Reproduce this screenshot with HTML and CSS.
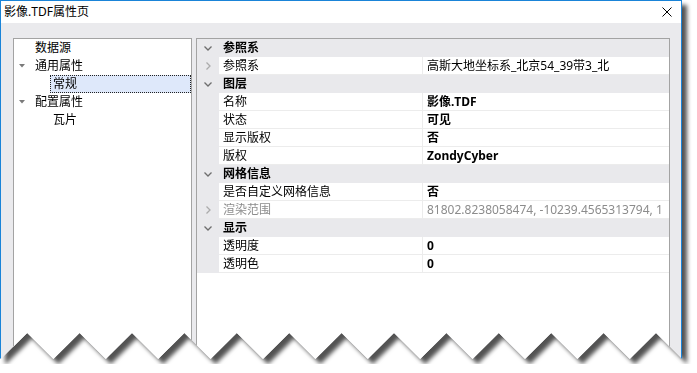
FILE: index.html
```html
<!DOCTYPE html>
<html lang="zh-CN">
<head>
    <meta charset="UTF-8">
    <title>影像.TDF属性页</title>
    <link rel="stylesheet" href="styles.css">
</head>
<body>
    <div class="frame">
        <div class="window">
            <div class="titlebar">
                <span class="title">影像.TDF属性页</span>
                <svg class="close" width="10" height="10" viewBox="0 0 10 10">
                    <path d="M0.5 0.5 L9.5 9.5 M9.5 0.5 L0.5 9.5" stroke="#000" stroke-width="1" fill="none"/>
                </svg>
            </div>
            <div class="body">
                <!-- left: page tree -->
                <div class="tree">
                    <div class="node">
                        <span class="toggle"></span>
                        <span class="label">数据源</span>
                    </div>
                    <div class="node">
                        <span class="toggle"><svg width="6" height="4" viewBox="0 0 6 4"><polygon points="0,0 6,0 3,3.5" fill="#7a7a7a"/></svg></span>
                        <span class="label">通用属性</span>
                    </div>
                    <div class="node child">
                        <span class="label selected">常规</span>
                    </div>
                    <div class="node">
                        <span class="toggle"><svg width="6" height="4" viewBox="0 0 6 4"><polygon points="0,0 6,0 3,3.5" fill="#7a7a7a"/></svg></span>
                        <span class="label">配置属性</span>
                    </div>
                    <div class="node child">
                        <span class="label">瓦片</span>
                    </div>
                </div>

                <!-- right: property grid -->
                <div class="grid">
                    <div class="row cat">
                        <span class="gutter"><svg width="8" height="5" viewBox="0 0 8 5"><path d="M0.5 0.5 L4 4 L7.5 0.5" stroke="#6e6e6e" stroke-width="1.3" fill="none"/></svg></span>
                        <span class="cat-name">参照系</span>
                    </div>
                    <div class="row">
                        <span class="gutter"><svg width="5" height="8" viewBox="0 0 5 8"><path d="M0.5 0.5 L4 4 L0.5 7.5" stroke="#ababab" stroke-width="1.3" fill="none"/></svg></span>
                        <span class="name">参照系</span>
                        <span class="value plain">高斯大地坐标系_北京54_39带3_北</span>
                    </div>
                    <div class="row cat">
                        <span class="gutter"><svg width="8" height="5" viewBox="0 0 8 5"><path d="M0.5 0.5 L4 4 L7.5 0.5" stroke="#6e6e6e" stroke-width="1.3" fill="none"/></svg></span>
                        <span class="cat-name">图层</span>
                    </div>
                    <div class="row">
                        <span class="gutter"></span>
                        <span class="name">名称</span>
                        <span class="value">影像.TDF</span>
                    </div>
                    <div class="row">
                        <span class="gutter"></span>
                        <span class="name">状态</span>
                        <span class="value">可见</span>
                    </div>
                    <div class="row">
                        <span class="gutter"></span>
                        <span class="name">显示版权</span>
                        <span class="value">否</span>
                    </div>
                    <div class="row">
                        <span class="gutter"></span>
                        <span class="name">版权</span>
                        <span class="value">ZondyCyber</span>
                    </div>
                    <div class="row cat">
                        <span class="gutter"><svg width="8" height="5" viewBox="0 0 8 5"><path d="M0.5 0.5 L4 4 L7.5 0.5" stroke="#6e6e6e" stroke-width="1.3" fill="none"/></svg></span>
                        <span class="cat-name">网格信息</span>
                    </div>
                    <div class="row">
                        <span class="gutter"></span>
                        <span class="name">是否自定义网格信息</span>
                        <span class="value">否</span>
                    </div>
                    <div class="row disabled">
                        <span class="gutter"><svg width="5" height="8" viewBox="0 0 5 8"><path d="M0.5 0.5 L4 4 L0.5 7.5" stroke="#ababab" stroke-width="1.3" fill="none"/></svg></span>
                        <span class="name">渲染范围</span>
                        <span class="value plain">81802.8238058474, -10239.4565313794, 1</span>
                    </div>
                    <div class="row cat">
                        <span class="gutter"><svg width="8" height="5" viewBox="0 0 8 5"><path d="M0.5 0.5 L4 4 L7.5 0.5" stroke="#6e6e6e" stroke-width="1.3" fill="none"/></svg></span>
                        <span class="cat-name">显示</span>
                    </div>
                    <div class="row">
                        <span class="gutter"></span>
                        <span class="name">透明度</span>
                        <span class="value">0</span>
                    </div>
                    <div class="row">
                        <span class="gutter"></span>
                        <span class="name">透明色</span>
                        <span class="value">0</span>
                    </div>
                </div>
            </div>
        </div>
    </div>
</body>
</html>
```

FILE: styles.css
```css
body {
    margin: 0;
    background-color: #fff;
    font-family: "Noto Sans", "Noto Sans CJK SC", sans-serif;
    font-size: 12px;
    color: #000;
}

/* the shadow falls on the torn edge and the right side */
.frame {
    width: 682px;
    filter: drop-shadow(5px 5px 2px rgba(0, 0, 0, 0.68));
}

.window {
    width: 682px;
    height: 364px;
    box-sizing: border-box;
    border: 1px solid #1a84d8;
    border-bottom: none;
    background-color: #eaeaed;
    display: flex;
    flex-direction: column;
    clip-path: polygon(0 0, 682px 0, 682px 359px,
        656px 333px, 629.8px 359px, 603.6px 333px, 577.4px 359px,
        551.2px 333px, 525px 359px, 498.8px 333px, 472.6px 359px,
        446.4px 333px, 420.2px 359px, 394px 333px, 367.8px 359px,
        341.6px 333px, 315.4px 359px, 289.2px 333px, 263px 359px,
        236.8px 333px, 210.6px 359px, 184.4px 333px, 158.2px 359px,
        132px 333px, 105.8px 359px, 79.6px 333px, 53.4px 359px,
        27.2px 333px, 1px 359px, 0 358px);
}

.titlebar {
    height: 22px;
    flex-shrink: 0;
    background-color: #fff;
    display: flex;
    align-items: center;
    justify-content: space-between;
    padding: 0 9px 0 3px;
}

.title {
    line-height: 22px;
}

.close {
    display: block;
}

.body {
    flex: 1;
    display: flex;
    gap: 4px;
    padding: 15px 11px 0 12px;
}

.tree {
    width: 179px;
    flex-shrink: 0;
    box-sizing: border-box;
    border: 1px solid #a3a3a3;
    background-color: #fff;
}

.node {
    height: 18px;
    display: flex;
    align-items: center;
}

.toggle {
    width: 21px;
    display: flex;
    align-items: center;
    padding-left: 5px;
    box-sizing: border-box;
}

.node.child {
    padding-left: 36px;
}

.node .label {
    line-height: 16px;
}

.node.child .label {
    flex: 1;
    height: 18px;
    line-height: 16px;
    box-sizing: border-box;
    border: 1px solid transparent;
    padding-left: 2px;
}

.node.child .label.selected {
    background-color: #dee8fa;
    border: 1px dotted #222;
}

.grid {
    flex: 1;
    box-sizing: border-box;
    border: 1px solid #a3a3a3;
    background-color: #fff;
}

.row {
    height: 18px;
    display: grid;
    grid-template-columns: 22px 204px 1fr;
}

.gutter {
    background-color: #e9e9ec;
    display: flex;
    align-items: center;
    justify-content: center;
}

.row.cat {
    background-color: #e9e9ec;
}

.cat-name {
    grid-column: 2 / 4;
    font-weight: bold;
    line-height: 18px;
    padding-left: 4px;
}

.name,
.value {
    box-sizing: border-box;
    line-height: 17px;
    border-bottom: 1px solid #ececec;
    padding-left: 4px;
    white-space: nowrap;
    overflow: hidden;
}

.name {
    border-right: 1px solid #ececec;
}

.value {
    font-weight: bold;
}

.value.plain {
    font-weight: normal;
}

.row.disabled .name,
.row.disabled .value {
    color: #8c8c8c;
}
```
